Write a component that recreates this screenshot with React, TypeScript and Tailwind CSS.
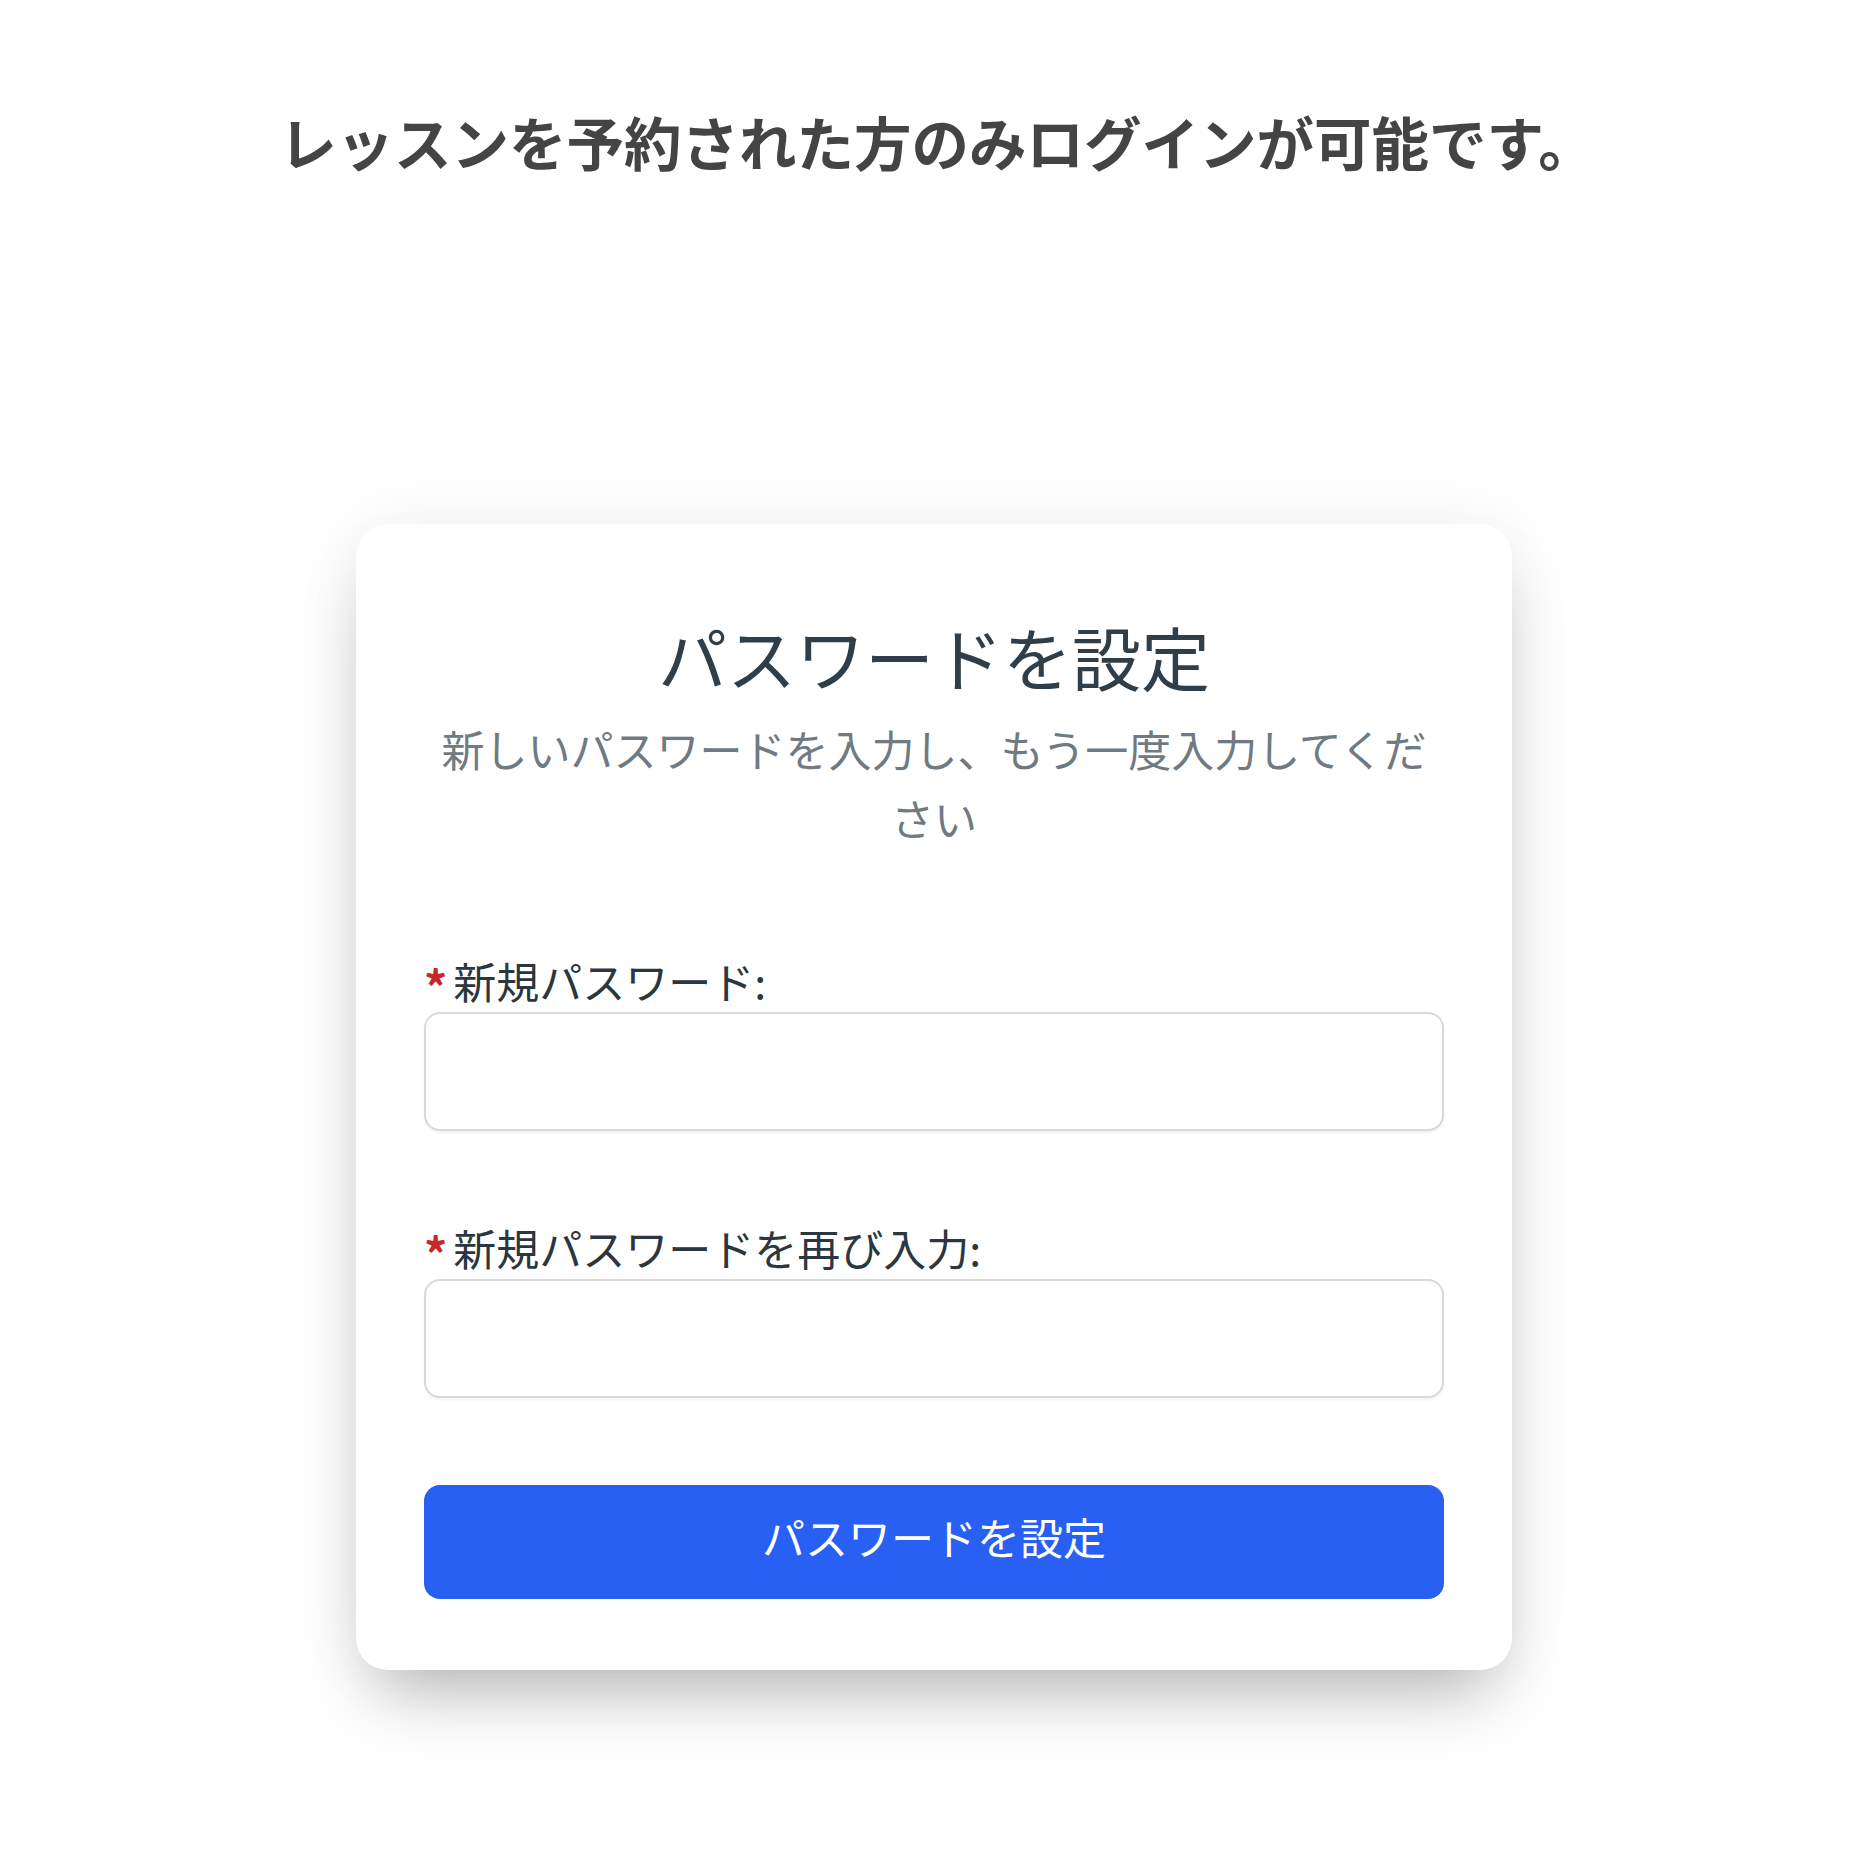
const fontStack = "font-['Noto_Sans_CJK_JP','Noto_Sans',sans-serif]";

function Field({ label }: { label: string }) {
  return (
    <div className="flex flex-col">
      <label className="flex items-center text-[43px] leading-[63px] text-[#2b3640]">
        <span className="mr-[6px] mt-[8px] text-[46px] font-bold leading-none text-[#c62828]">*</span>
        {label}
      </label>
      <input
        type="password"
        className="h-[119px] w-full rounded-[16px] border-2 border-[#d6d9dd] bg-white px-6 text-[40px] shadow-[0_2px_3px_rgba(0,0,0,0.05)] outline-none"
      />
    </div>
  );
}

export default function App() {
  return (
    <div className={`min-h-[1875px] bg-white ${fontStack}`}>
      <h1 className="pt-[98px] text-center text-[57.5px] font-bold leading-[86px] text-[#444444]">
        レッスンを予約された方のみログインが可能です。
      </h1>

      <div className="ml-[356px] mt-[340px] w-[1156px] rounded-[32px] bg-white px-[68px] pt-[90px] pb-[71px] shadow-[0_40px_70px_-20px_rgba(0,0,0,0.28),0_0_70px_rgba(0,0,0,0.06)]">
        <h2 className="text-center text-[69px] font-normal leading-[84px] text-[#2f3e48]">
          パスワードを設定
        </h2>
        <p className="mt-[16px] text-center text-[43px] leading-[69px] text-[#6f7a83]">
          新しいパスワードを入力し、もう一度入力してください
        </p>

        <form className="mt-[97px] flex flex-col">
          <Field label="新規パスワード:" />
          <div className="mt-[85px]">
            <Field label="新規パスワードを再び入力:" />
          </div>
          <button
            type="button"
            className="mt-[87px] h-[114px] w-full rounded-[16px] bg-[#2760f2] pb-[12px] text-[43px] text-white"
          >
            パスワードを設定
          </button>
        </form>
      </div>
    </div>
  );
}
